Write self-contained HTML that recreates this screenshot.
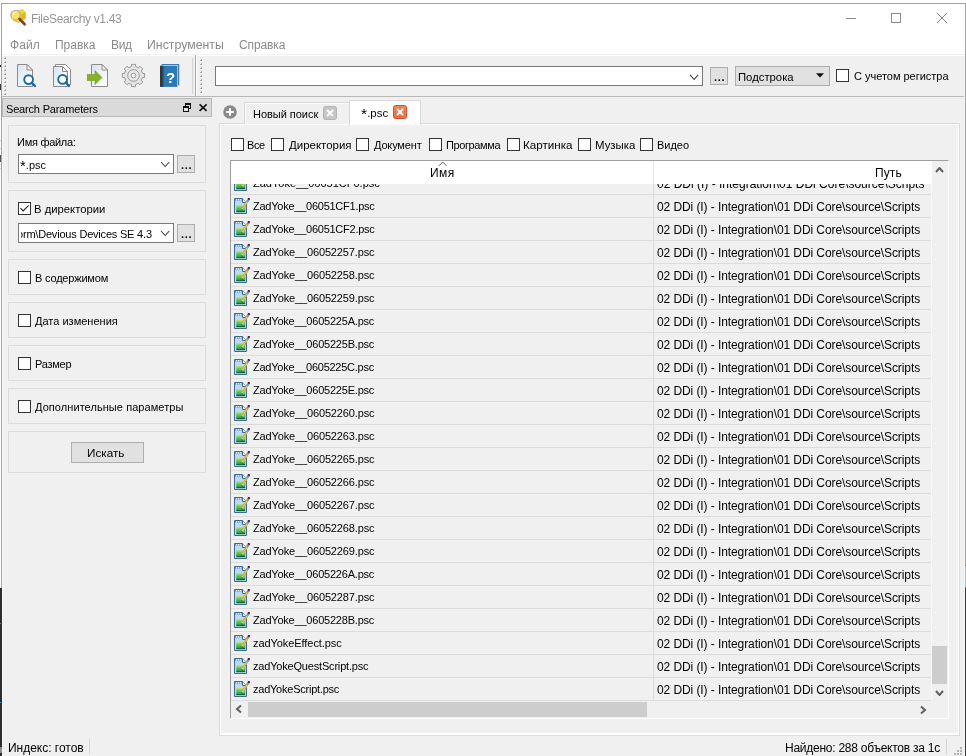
<!DOCTYPE html>
<html lang="ru"><head><meta charset="utf-8"><title>FileSearchy v1.43</title>
<style>
html,body{margin:0;padding:0;}
body{width:966px;height:756px;overflow:hidden;position:relative;background:#fff;
 font-family:"Liberation Sans",sans-serif;font-size:11px;}
.b{position:absolute;box-sizing:border-box;}
.t{position:absolute;white-space:pre;line-height:1;will-change:transform;}
.cb{width:13px;height:13px;border:1px solid #333;background:#fff;}
</style></head><body>

<div class="b" style="left:1px;top:3px;width:965px;height:760px;border:1px solid #a3a3a3;background:#fff;"></div>
<div class="b" style="left:0px;top:65px;width:1px;height:2px;background:#2a2a2a;"></div>
<div class="b" style="left:0px;top:84px;width:1px;height:6px;background:#3a3a3a;"></div>
<div class="b" style="left:0px;top:140px;width:1px;height:1px;background:#d0d0d0;"></div>
<div class="b" style="left:0px;top:148px;width:1px;height:1px;background:#d0d0d0;"></div>
<div class="b" style="left:0px;top:155px;width:1px;height:7px;background:#555;"></div>
<div class="b" style="left:0px;top:168px;width:1px;height:1px;background:#d0d0d0;"></div>
<div class="b" style="left:0px;top:588px;width:2px;height:159px;background:#2d2d2d;"></div>
<div class="b" style="left:0px;top:623px;width:1px;height:1px;background:#3a8ac0;"></div>
<div class="b" style="left:0px;top:702px;width:1px;height:1px;background:#3a8ac0;"></div>
<div class="b" style="left:0px;top:747px;width:2px;height:6px;background:#8c8c8c;"></div>
<div class="b" style="left:0px;top:753px;width:2px;height:3px;background:#2d2d2d;"></div>
<div class="b" style="left:965px;top:565px;width:1px;height:1px;background:#3a8ac0;"></div>
<div class="b" style="left:965px;top:566px;width:1px;height:21px;background:#b4bcc4;"></div>
<div class="b" style="left:965px;top:587px;width:1px;height:1px;background:#3a8ac0;"></div>
<div class="b" style="left:965px;top:588px;width:1px;height:168px;background:#383838;"></div>
<div class="b" style="left:2px;top:56px;width:963px;height:700px;background:#f0f0f0;"></div>
<div class="b" style="left:2px;top:54px;width:963px;height:1px;background:#f2f2f2;"></div>
<div class="b" style="left:2px;top:96px;width:963px;height:1px;background:#b8b8b8;"></div>
<div class="b" style="left:2px;top:117px;width:1px;height:639px;background:#f9f9f9;"></div>
<div class="b" style="left:964px;top:56px;width:1px;height:700px;background:#f6f6f6;"></div>
<svg class="b" style="left:10px;top:9px" width="17" height="17" viewBox="0 0 17 17">
<path d="M4 3 L12.5 0.6 L15.4 3.2 L15.4 9.5 L8.5 13.6 L3.4 11.5 Z" fill="#f7d827" stroke="#d4ab10" stroke-width="0.5"/>
<path d="M8.5 13.6 L15.4 9.5 L15.4 3.2 L11.5 5 Z" fill="#e8b80e"/>
<path d="M10.5 11 L15.2 16" stroke="#8c8c8c" stroke-opacity="0.5" stroke-width="2.6" stroke-linecap="round"/>
<circle cx="5.6" cy="6.2" r="4.7" fill="#fbe65c" fill-opacity="0.8" stroke="#b4b6bb" stroke-width="1.5"/>
<path d="M3 5.5 Q4 3 6.5 3.2" stroke="#fff" stroke-opacity="0.8" stroke-width="1.2" fill="none"/>
<path d="M9.4 9.8 L14.6 15.2" stroke="#8c3a12" stroke-width="2.4" stroke-linecap="round"/>
</svg>
<span id="title" class="t" style="left:30.80px;top:12.84px;font-size:12px;letter-spacing:-0.335px;color:#969696;">FileSearchy v1.43</span>
<svg class="b" style="left:840px;top:8px" width="120" height="22" viewBox="0 0 120 22" shape-rendering="crispEdges">
<path d="M6 10.5 H16" stroke="#8a8a8a" stroke-width="1"/>
<rect x="51.5" y="5.5" width="9" height="9" fill="none" stroke="#8a8a8a" stroke-width="1"/>
</svg>
<svg class="b" style="left:936px;top:12px" width="12" height="12" viewBox="0 0 12 12">
<path d="M1 1 L11 11 M11 1 L1 11" stroke="#858585" stroke-width="1" fill="none"/></svg>
<span id="m1" class="t" style="left:9.82px;top:38.84px;font-size:12px;letter-spacing:0.057px;color:#8a8a8a;">Файл</span>
<span id="m2" class="t" style="left:54.80px;top:38.84px;font-size:12px;letter-spacing:-0.028px;color:#8a8a8a;">Правка</span>
<span id="m3" class="t" style="left:110.82px;top:38.84px;font-size:12px;letter-spacing:-0.350px;color:#8a8a8a;">Вид</span>
<span id="m4" class="t" style="left:146.80px;top:38.84px;font-size:12px;letter-spacing:0.000px;color:#8a8a8a;transform:scaleX(1.0260);transform-origin:0 0;">Инструменты</span>
<span id="m5" class="t" style="left:239.30px;top:38.84px;font-size:12px;letter-spacing:-0.117px;color:#8a8a8a;">Справка</span>
<svg class="b" style="left:4px;top:57px" width="3" height="40" viewBox="0 0 3 40" shape-rendering="crispEdges"><rect x="1" y="0" width="1" height="1" fill="#b4b4b4"/><rect x="0" y="1" width="1" height="1" fill="#b4b4b4"/><rect x="1" y="1" width="1" height="1" fill="#8e8e8e"/><rect x="0" y="0" width="1" height="1" fill="#fbfbfb"/><rect x="2" y="1" width="1" height="1" fill="#fbfbfb"/><rect x="1" y="2" width="1" height="1" fill="#fbfbfb"/><rect x="1" y="4" width="1" height="1" fill="#b4b4b4"/><rect x="0" y="5" width="1" height="1" fill="#b4b4b4"/><rect x="1" y="5" width="1" height="1" fill="#8e8e8e"/><rect x="0" y="4" width="1" height="1" fill="#fbfbfb"/><rect x="2" y="5" width="1" height="1" fill="#fbfbfb"/><rect x="1" y="6" width="1" height="1" fill="#fbfbfb"/><rect x="1" y="8" width="1" height="1" fill="#b4b4b4"/><rect x="0" y="9" width="1" height="1" fill="#b4b4b4"/><rect x="1" y="9" width="1" height="1" fill="#8e8e8e"/><rect x="0" y="8" width="1" height="1" fill="#fbfbfb"/><rect x="2" y="9" width="1" height="1" fill="#fbfbfb"/><rect x="1" y="10" width="1" height="1" fill="#fbfbfb"/><rect x="1" y="12" width="1" height="1" fill="#b4b4b4"/><rect x="0" y="13" width="1" height="1" fill="#b4b4b4"/><rect x="1" y="13" width="1" height="1" fill="#8e8e8e"/><rect x="0" y="12" width="1" height="1" fill="#fbfbfb"/><rect x="2" y="13" width="1" height="1" fill="#fbfbfb"/><rect x="1" y="14" width="1" height="1" fill="#fbfbfb"/><rect x="1" y="16" width="1" height="1" fill="#b4b4b4"/><rect x="0" y="17" width="1" height="1" fill="#b4b4b4"/><rect x="1" y="17" width="1" height="1" fill="#8e8e8e"/><rect x="0" y="16" width="1" height="1" fill="#fbfbfb"/><rect x="2" y="17" width="1" height="1" fill="#fbfbfb"/><rect x="1" y="18" width="1" height="1" fill="#fbfbfb"/><rect x="1" y="20" width="1" height="1" fill="#b4b4b4"/><rect x="0" y="21" width="1" height="1" fill="#b4b4b4"/><rect x="1" y="21" width="1" height="1" fill="#8e8e8e"/><rect x="0" y="20" width="1" height="1" fill="#fbfbfb"/><rect x="2" y="21" width="1" height="1" fill="#fbfbfb"/><rect x="1" y="22" width="1" height="1" fill="#fbfbfb"/><rect x="1" y="24" width="1" height="1" fill="#b4b4b4"/><rect x="0" y="25" width="1" height="1" fill="#b4b4b4"/><rect x="1" y="25" width="1" height="1" fill="#8e8e8e"/><rect x="0" y="24" width="1" height="1" fill="#fbfbfb"/><rect x="2" y="25" width="1" height="1" fill="#fbfbfb"/><rect x="1" y="26" width="1" height="1" fill="#fbfbfb"/><rect x="1" y="28" width="1" height="1" fill="#b4b4b4"/><rect x="0" y="29" width="1" height="1" fill="#b4b4b4"/><rect x="1" y="29" width="1" height="1" fill="#8e8e8e"/><rect x="0" y="28" width="1" height="1" fill="#fbfbfb"/><rect x="2" y="29" width="1" height="1" fill="#fbfbfb"/><rect x="1" y="30" width="1" height="1" fill="#fbfbfb"/><rect x="1" y="32" width="1" height="1" fill="#b4b4b4"/><rect x="0" y="33" width="1" height="1" fill="#b4b4b4"/><rect x="1" y="33" width="1" height="1" fill="#8e8e8e"/><rect x="0" y="32" width="1" height="1" fill="#fbfbfb"/><rect x="2" y="33" width="1" height="1" fill="#fbfbfb"/><rect x="1" y="34" width="1" height="1" fill="#fbfbfb"/><rect x="1" y="36" width="1" height="1" fill="#b4b4b4"/><rect x="0" y="37" width="1" height="1" fill="#b4b4b4"/><rect x="1" y="37" width="1" height="1" fill="#8e8e8e"/><rect x="0" y="36" width="1" height="1" fill="#fbfbfb"/><rect x="2" y="37" width="1" height="1" fill="#fbfbfb"/><rect x="1" y="38" width="1" height="1" fill="#fbfbfb"/></svg>
<svg class="b" style="left:200px;top:59px" width="3" height="36" viewBox="0 0 3 36" shape-rendering="crispEdges"><rect x="1" y="0" width="1" height="1" fill="#b4b4b4"/><rect x="0" y="1" width="1" height="1" fill="#b4b4b4"/><rect x="1" y="1" width="1" height="1" fill="#8e8e8e"/><rect x="0" y="0" width="1" height="1" fill="#fbfbfb"/><rect x="2" y="1" width="1" height="1" fill="#fbfbfb"/><rect x="1" y="2" width="1" height="1" fill="#fbfbfb"/><rect x="1" y="4" width="1" height="1" fill="#b4b4b4"/><rect x="0" y="5" width="1" height="1" fill="#b4b4b4"/><rect x="1" y="5" width="1" height="1" fill="#8e8e8e"/><rect x="0" y="4" width="1" height="1" fill="#fbfbfb"/><rect x="2" y="5" width="1" height="1" fill="#fbfbfb"/><rect x="1" y="6" width="1" height="1" fill="#fbfbfb"/><rect x="1" y="8" width="1" height="1" fill="#b4b4b4"/><rect x="0" y="9" width="1" height="1" fill="#b4b4b4"/><rect x="1" y="9" width="1" height="1" fill="#8e8e8e"/><rect x="0" y="8" width="1" height="1" fill="#fbfbfb"/><rect x="2" y="9" width="1" height="1" fill="#fbfbfb"/><rect x="1" y="10" width="1" height="1" fill="#fbfbfb"/><rect x="1" y="12" width="1" height="1" fill="#b4b4b4"/><rect x="0" y="13" width="1" height="1" fill="#b4b4b4"/><rect x="1" y="13" width="1" height="1" fill="#8e8e8e"/><rect x="0" y="12" width="1" height="1" fill="#fbfbfb"/><rect x="2" y="13" width="1" height="1" fill="#fbfbfb"/><rect x="1" y="14" width="1" height="1" fill="#fbfbfb"/><rect x="1" y="16" width="1" height="1" fill="#b4b4b4"/><rect x="0" y="17" width="1" height="1" fill="#b4b4b4"/><rect x="1" y="17" width="1" height="1" fill="#8e8e8e"/><rect x="0" y="16" width="1" height="1" fill="#fbfbfb"/><rect x="2" y="17" width="1" height="1" fill="#fbfbfb"/><rect x="1" y="18" width="1" height="1" fill="#fbfbfb"/><rect x="1" y="20" width="1" height="1" fill="#b4b4b4"/><rect x="0" y="21" width="1" height="1" fill="#b4b4b4"/><rect x="1" y="21" width="1" height="1" fill="#8e8e8e"/><rect x="0" y="20" width="1" height="1" fill="#fbfbfb"/><rect x="2" y="21" width="1" height="1" fill="#fbfbfb"/><rect x="1" y="22" width="1" height="1" fill="#fbfbfb"/><rect x="1" y="24" width="1" height="1" fill="#b4b4b4"/><rect x="0" y="25" width="1" height="1" fill="#b4b4b4"/><rect x="1" y="25" width="1" height="1" fill="#8e8e8e"/><rect x="0" y="24" width="1" height="1" fill="#fbfbfb"/><rect x="2" y="25" width="1" height="1" fill="#fbfbfb"/><rect x="1" y="26" width="1" height="1" fill="#fbfbfb"/><rect x="1" y="28" width="1" height="1" fill="#b4b4b4"/><rect x="0" y="29" width="1" height="1" fill="#b4b4b4"/><rect x="1" y="29" width="1" height="1" fill="#8e8e8e"/><rect x="0" y="28" width="1" height="1" fill="#fbfbfb"/><rect x="2" y="29" width="1" height="1" fill="#fbfbfb"/><rect x="1" y="30" width="1" height="1" fill="#fbfbfb"/><rect x="1" y="32" width="1" height="1" fill="#b4b4b4"/><rect x="0" y="33" width="1" height="1" fill="#b4b4b4"/><rect x="1" y="33" width="1" height="1" fill="#8e8e8e"/><rect x="0" y="32" width="1" height="1" fill="#fbfbfb"/><rect x="2" y="33" width="1" height="1" fill="#fbfbfb"/><rect x="1" y="34" width="1" height="1" fill="#fbfbfb"/></svg>
<div class="b" style="left:192px;top:58px;width:1px;height:36px;background:#d4d4d4;"></div>
<div class="b" style="left:195px;top:55px;width:1px;height:41px;background:#a6a6a6;"></div>
<div class="b" style="left:196px;top:56px;width:1px;height:40px;background:#fdfdfd;"></div>
<svg class="b" style="left:17px;top:64px" width="20" height="24" viewBox="0 0 20 24"><defs><linearGradient id="pg" x1="0" y1="0" x2="1" y2="1"><stop offset="0" stop-color="#d6e2fa"/><stop offset="0.6" stop-color="#f2f5fc"/><stop offset="1" stop-color="#fff"/></linearGradient></defs><path d="M0.5 0.5 H10 L15.5 6 V22.5 H0.5 Z" fill="url(#pg)" stroke="#8c8c8c"/><path d="M10 0.5 V6 H15.5 Z" fill="#f4f4ee" stroke="#8c8c8c" stroke-linejoin="round"/><circle cx="11.6" cy="15.6" r="4.4" fill="#fff" fill-opacity="0.85" stroke="#1b6aa3" stroke-width="1.9"/><path d="M14.8 18.8 L18 22" stroke="#1b6aa3" stroke-width="2.4" stroke-linecap="round"/></svg>
<svg class="b" style="left:53px;top:64px" width="20" height="24" viewBox="0 0 20 24"><defs><linearGradient id="pg2" x1="0" y1="0" x2="1" y2="1"><stop offset="0" stop-color="#d6e2fa"/><stop offset="0.6" stop-color="#f2f5fc"/><stop offset="1" stop-color="#fff"/></linearGradient></defs><path d="M2.5 0.5 H12.5 L17.5 5.5 V20.5 H2.5 Z" fill="#fff" stroke="#8a8a8a"/><path d="M0.5 2.5 H9.5 L14.5 7.5 V22.5 H0.5 Z" fill="url(#pg2)" stroke="#8a8a8a"/><path d="M9.5 2.5 V7.5 H14.5 Z" fill="#f4f4ee" stroke="#8a8a8a" stroke-linejoin="round"/><circle cx="9.6" cy="15.4" r="4.4" fill="#fff" fill-opacity="0.85" stroke="#1b6aa3" stroke-width="1.9"/><path d="M12.8 18.6 L16 22" stroke="#1b6aa3" stroke-width="2.4" stroke-linecap="round"/></svg>
<svg class="b" style="left:87px;top:64px" width="22" height="24" viewBox="0 0 22 24"><defs><linearGradient id="pg3" x1="0" y1="0" x2="1" y2="1"><stop offset="0" stop-color="#d6e2fa"/><stop offset="0.6" stop-color="#f2f5fc"/><stop offset="1" stop-color="#fff"/></linearGradient></defs><path d="M4.5 0.5 H15 L20.5 6 V22.5 H4.5 Z" fill="url(#pg3)" stroke="#8c8c8c"/><path d="M15 0.5 V6 H20.5 Z" fill="#f4f4ee" stroke="#8c8c8c" stroke-linejoin="round"/><path d="M0 10.5 H8 V6.5 L15 13.5 L8 20.5 V16.5 H0 Z" fill="#86b324" stroke="#6f9a18" stroke-width="0.6"/></svg>
<svg class="b" style="left:121px;top:63px" width="25" height="25" viewBox="0 0 25 25"><path d="M23.63 10.56 L23.63 14.44 L21.45 14.65 L20.34 17.31 L21.75 19.00 L19.00 21.75 L17.31 20.34 L14.65 21.45 L14.44 23.63 L10.56 23.63 L10.35 21.45 L7.69 20.34 L6.00 21.75 L3.25 19.00 L4.66 17.31 L3.55 14.65 L1.37 14.44 L1.37 10.56 L3.55 10.35 L4.66 7.69 L3.25 6.00 L6.00 3.25 L7.69 4.66 L10.35 3.55 L10.56 1.37 L14.44 1.37 L14.65 3.55 L17.31 4.66 L19.00 3.25 L21.75 6.00 L20.34 7.69 L21.45 10.35 Z" fill="#e4e4e4" stroke="#8e8e8e" stroke-width="0.9" stroke-linejoin="round"/><circle cx="12.5" cy="12.5" r="5.8" fill="#e9e9e9" stroke="#8e8e8e" stroke-width="0.9"/><circle cx="12.5" cy="12.5" r="2.4" fill="#f0f0f0" stroke="#8e8e8e" stroke-width="0.9"/></svg>
<svg class="b" style="left:160px;top:64px;will-change:transform" width="20" height="24" viewBox="0 0 20 24"><defs><linearGradient id="sp" x1="0" y1="0" x2="1" y2="0"><stop offset="0" stop-color="#1e2224"/><stop offset="1" stop-color="#4d565b"/></linearGradient></defs><rect x="1.6" y="0.2" width="17.6" height="21.2" fill="#1c6299"/><rect x="2" y="1.1" width="16.2" height="21" fill="#dfe3e7"/><rect x="0.2" y="1.8" width="17.1" height="21.1" fill="#2a7ab6"/><rect x="0.2" y="1.8" width="3.6" height="21.1" fill="url(#sp)"/><text x="10.7" y="19.3" font-family="Liberation Sans, sans-serif" font-weight="bold" font-size="15" fill="#fff" text-anchor="middle">?</text></svg>
<div class="b" style="left:215px;top:66px;width:488px;height:20px;background:#fff;border:1px solid #7a7a7a;"></div>
<svg class="b" style="left:688.9px;top:73.6px" width="10.2" height="6.4" viewBox="-1 -1 10.2 6.4"><path d="M0 0 L4.1 4.4 L8.2 0" fill="none" stroke="#444" stroke-width="1.1"/></svg>
<div class="b" style="left:710px;top:67px;width:18px;height:18px;background:#e1e1e1;border:1px solid #adadad;"></div>
<span id="dots0" class="t" style="left:713.60px;top:71.69px;font-size:11px;letter-spacing:0.700px;color:#000;font-weight:bold;">...</span>
<div class="b" style="left:735px;top:66px;width:95px;height:20px;background:#e1e1e1;border:1px solid #adadad;"></div>
<span id="substr" class="t" style="left:737.54px;top:71.69px;font-size:11px;letter-spacing:0.000px;color:#000;transform:scaleX(1.0271);transform-origin:0 0;">Подстрока</span>
<svg class="b" style="left:816px;top:73px" width="8" height="5" viewBox="0 0 8 5"><path d="M0 0.3 H8 L4 4.6 Z" fill="#111"/></svg>
<div class="b cb" style="left:836px;top:69px;"></div>
<span id="case" class="t" style="left:853.52px;top:70.69px;font-size:11px;letter-spacing:-0.016px;color:#000;">С учетом регистра</span>
<div class="b" style="left:2px;top:98px;width:210px;height:19px;background:#dadada;border:1px solid #bababa;"></div>
<span id="dock" class="t" style="left:6.30px;top:103.69px;font-size:11px;letter-spacing:-0.175px;color:#000;">Search Parameters</span>
<svg class="b" style="left:181px;top:102px" width="28" height="11" viewBox="0 0 28 11" shape-rendering="crispEdges">
<rect x="4.5" y="1.5" width="5" height="5" fill="none" stroke="#111"/><rect x="4" y="1" width="6" height="2" fill="#111"/>
<rect x="2.5" y="4.5" width="5" height="5" fill="#e6e6e6" stroke="#111"/><rect x="2" y="4" width="6" height="2" fill="#111"/>
</svg>
<svg class="b" style="left:198px;top:102px" width="11" height="11" viewBox="0 0 11 11">
<path d="M1.6 2.4 L8.6 8.8 M8.6 2.4 L1.6 8.8" stroke="#111" stroke-width="1.7" fill="none"/></svg>
<div class="b" style="left:8px;top:125px;width:198px;height:58px;border:1px solid #dcdcdc;"></div>
<div class="b" style="left:8px;top:190px;width:198px;height:62px;border:1px solid #dcdcdc;"></div>
<div class="b" style="left:8px;top:259px;width:198px;height:36px;border:1px solid #dcdcdc;"></div>
<div class="b" style="left:8px;top:302px;width:198px;height:36px;border:1px solid #dcdcdc;"></div>
<div class="b" style="left:8px;top:345px;width:198px;height:36px;border:1px solid #dcdcdc;"></div>
<div class="b" style="left:8px;top:388px;width:198px;height:36px;border:1px solid #dcdcdc;"></div>
<div class="b" style="left:8px;top:431px;width:198px;height:42px;border:1px solid #dcdcdc;"></div>
<span id="fname" class="t" style="left:17.30px;top:136.69px;font-size:11px;letter-spacing:-0.275px;color:#000;">Имя файла:</span>
<div class="b" style="left:18px;top:154px;width:156px;height:20px;background:#fff;border:1px solid #7a7a7a;"></div>
<span id="c1" class="t" style="left:20.15px;top:159.69px;font-size:11px;letter-spacing:0.000px;color:#000;transform:scaleX(0.9950);transform-origin:0 0;"><span style="font-size:15px;line-height:0;position:relative;top:1.6px;letter-spacing:0">*</span>.psc</span>
<svg class="b" style="left:159.9px;top:161.45px" width="10.3" height="6.5" viewBox="-1 -1 10.3 6.5"><path d="M0 0 L4.15 4.5 L8.3 0" fill="none" stroke="#444" stroke-width="1.1"/></svg>
<div class="b" style="left:177px;top:155px;width:18px;height:18px;background:#e1e1e1;border:1px solid #adadad;"></div>
<span id="dots1" class="t" style="left:180.80px;top:159.69px;font-size:11px;letter-spacing:0.700px;color:#000;font-weight:bold;">...</span>
<div class="b cb" style="left:18px;top:202px;"><svg width="11" height="11" viewBox="0 0 11 11" style="position:absolute;left:0;top:0"><path d="M1.5 5.2 L4.2 8 L9.6 2.4" fill="none" stroke="#222" stroke-width="1.1"/></svg></div>
<span id="indir" class="t" style="left:34.32px;top:203.69px;font-size:11px;letter-spacing:0.000px;color:#000;transform:scaleX(1.0257);transform-origin:0 0;">В директории</span>
<div class="b" style="left:18px;top:223px;width:156px;height:20px;background:#fff;border:1px solid #7a7a7a;"></div>
<div class="b" style="left:21px;top:224px;width:138px;height:18px;overflow:hidden">
<span id="c2" class="t" style="left:-4.00px;top:4.69px;font-size:11px;letter-spacing:-0.200px;color:#000;">orm\Devious Devices SE 4.3</span>
</div>
<svg class="b" style="left:159.9px;top:230.45px" width="10.3" height="6.5" viewBox="-1 -1 10.3 6.5"><path d="M0 0 L4.15 4.5 L8.3 0" fill="none" stroke="#444" stroke-width="1.1"/></svg>
<div class="b" style="left:177px;top:224px;width:18px;height:18px;background:#e1e1e1;border:1px solid #adadad;"></div>
<span id="dots2" class="t" style="left:180.80px;top:228.69px;font-size:11px;letter-spacing:0.700px;color:#000;font-weight:bold;">...</span>
<div class="b cb" style="left:18px;top:271px;"></div>
<span id="incont" class="t" style="left:34.54px;top:272.69px;font-size:11px;letter-spacing:-0.191px;color:#000;">В содержимом</span>
<div class="b cb" style="left:18px;top:314px;"></div>
<span id="dmod" class="t" style="left:35.24px;top:315.69px;font-size:11px;letter-spacing:0.010px;color:#000;">Дата изменения</span>
<div class="b cb" style="left:18px;top:357px;"></div>
<span id="size" class="t" style="left:34.54px;top:358.69px;font-size:11px;letter-spacing:-0.252px;color:#000;">Размер</span>
<div class="b cb" style="left:18px;top:400px;"></div>
<span id="extra" class="t" style="left:35.24px;top:401.69px;font-size:11px;letter-spacing:0.067px;color:#000;">Дополнительные параметры</span>
<div class="b" style="left:71px;top:442px;width:73px;height:21px;background:#e1e1e1;border:1px solid #adadad;"></div>
<span id="search" class="t" style="left:87.34px;top:447.69px;font-size:11px;letter-spacing:0.000px;color:#000;transform:scaleX(1.0653);transform-origin:0 0;">Искать</span>
<svg class="b" style="left:223px;top:105px" width="14" height="14" viewBox="0 0 14 14">
<circle cx="7" cy="7" r="6.8" fill="#8a8a8a"/><path d="M7 3.2 V10.8 M3.2 7 H10.8" stroke="#fff" stroke-width="2"/></svg>
<div class="b" style="left:219px;top:123px;width:741px;height:613px;border:1px solid #d9d9d9;border-right-color:#dcdcdc;border-bottom-color:#dcdcdc;"></div>
<div class="b" style="left:220px;top:124px;width:739px;height:611px;border:1px solid #fff;border-bottom-width:2px;"></div>
<div class="b" style="left:244px;top:102px;width:106px;height:22px;border:1px solid #d9d9d9;border-bottom:none;background:#f0f0f0;"></div>
<div class="b" style="left:245px;top:103px;width:104px;height:20px;border-left:1px solid #f9f9f9;border-top:1px solid #f9f9f9;"></div>
<span id="tab1" class="t" style="left:252.80px;top:108.69px;font-size:11px;letter-spacing:-0.028px;color:#000;">Новый поиск</span>
<div class="b" style="left:323px;top:106px;width:14px;height:14px;background:#c6c6c6;border:1px solid #b2b2b2;border-radius:2.5px;"></div>
<svg class="b" style="left:326px;top:109px" width="8" height="8" viewBox="0 0 8 8"><path d="M1 1 L7 7 M7 1 L1 7" stroke="#fff" stroke-width="1.8"/></svg>
<div class="b" style="left:349px;top:100px;width:72px;height:25px;border:1px solid #d9d9d9;border-bottom:none;background:#fff;"></div>
<span id="tab2" class="t" style="left:361.08px;top:107.69px;font-size:11px;letter-spacing:0.000px;color:#000;transform:scaleX(1.0483);transform-origin:0 0;"><span style="font-size:15px;line-height:0;position:relative;top:1.6px;letter-spacing:0">*</span>.psc</span>
<div class="b" style="left:393px;top:105px;width:14px;height:14px;background:linear-gradient(#ea8a5c,#e5703f);border:1px solid #e0482c;border-radius:2.5px;"></div>
<svg class="b" style="left:396px;top:108px" width="8" height="8" viewBox="0 0 8 8"><path d="M1 1 L7 7 M7 1 L1 7" stroke="#fff" stroke-width="1.8"/></svg>
<div class="b cb" style="left:231px;top:138px;"></div>
<span id="f1" class="t" style="left:247.34px;top:140.19px;font-size:11px;letter-spacing:-0.420px;color:#000;">Все</span>
<div class="b cb" style="left:271px;top:138px;"></div>
<span id="f2" class="t" style="left:289.00px;top:140.19px;font-size:11px;letter-spacing:0.000px;color:#000;transform:scaleX(1.0419);transform-origin:0 0;">Директория</span>
<div class="b cb" style="left:356px;top:138px;"></div>
<span id="f3" class="t" style="left:374.00px;top:140.19px;font-size:11px;letter-spacing:-0.160px;color:#000;">Документ</span>
<div class="b cb" style="left:429px;top:138px;"></div>
<span id="f4" class="t" style="left:446.30px;top:140.19px;font-size:11px;letter-spacing:-0.390px;color:#000;">Программа</span>
<div class="b cb" style="left:507px;top:138px;"></div>
<span id="f5" class="t" style="left:523.32px;top:140.19px;font-size:11px;letter-spacing:0.000px;color:#000;transform:scaleX(1.0566);transform-origin:0 0;">Картинка</span>
<div class="b cb" style="left:578px;top:138px;"></div>
<span id="f6" class="t" style="left:594.56px;top:140.19px;font-size:11px;letter-spacing:0.000px;color:#000;transform:scaleX(1.0379);transform-origin:0 0;">Музыка</span>
<div class="b cb" style="left:640px;top:138px;"></div>
<span id="f7" class="t" style="left:656.58px;top:140.19px;font-size:11px;letter-spacing:-0.035px;color:#000;">Видео</span>
<div class="b" style="left:230px;top:160px;width:719px;height:559px;border:1px solid #a0a0a0;border-right-color:#fff;border-bottom-color:#fff;background:#f0f0f0;"></div>
<svg width="0" height="0" style="position:absolute"><defs><linearGradient id="gg" x1="0" y1="0" x2="0" y2="1"><stop offset="0" stop-color="#c4e47e"/><stop offset="0.35" stop-color="#6cc860"/><stop offset="0.8" stop-color="#2da04a"/><stop offset="0.86" stop-color="#0a6a30"/><stop offset="1" stop-color="#0a6a30"/></linearGradient></defs></svg>
<div class="b" style="left:231px;top:161px;width:701px;height:540px;overflow:hidden">
<div class="b" style="left:0;top:11px;width:700px;height:23px;border-bottom:1px solid #dcdcdc;"></div>
<svg class="b" style="left:3px;top:14px" width="17" height="16" viewBox="0 0 17 16"><path d="M0.5 0.5 H8.5 L12.5 4.5 V15.5 H0.5 Z" fill="#bcdaf5" stroke="#3b6a9a"/><rect x="1" y="1" width="8" height="1.6" fill="#5f8dbd"/><path d="M8.5 0.5 V4.5 H12.5" fill="#eef5fc" stroke="#3b6a9a"/><circle cx="2.6" cy="1.8" r="0.75" fill="#fff"/><circle cx="4.7" cy="1.8" r="0.75" fill="#fff"/><circle cx="6.8" cy="1.8" r="0.75" fill="#fff"/><rect x="2.2" y="7" width="9" height="7.2" fill="url(#gg)"/><path d="M13.40 3.26 L8.86 10.56" stroke="#c9a52c" stroke-width="2.3"/><path d="M13.19 3.60 L8.96 10.39" stroke="#e6d27a" stroke-width="0.8"/><path d="M15.30 0.20 L14.30 1.81" stroke="#5a0a32" stroke-width="2.3"/><path d="M14.30 1.81 L13.29 3.43" stroke="#4f8fd6" stroke-width="2.3"/><path d="M8.96 10.39 L8.22 11.58" stroke="#e3d3ad" stroke-width="2"/><path d="M8.28 11.49 L7.70 12.43" stroke="#2c3450" stroke-width="1.2"/></svg>
<span id="n0" class="t" style="left:21.50px;top:16.69px;font-size:11px;letter-spacing:0.000px;color:#000;">ZadYoke__06051CF0.psc</span>
<span id="p0" class="t" style="left:426.30px;top:16.84px;font-size:12px;letter-spacing:0.000px;color:#000;">02 DDi (I) - Integration\01 DDi Core\source\Scripts</span>
<div class="b" style="left:0;top:34px;width:700px;height:23px;border-bottom:1px solid #dcdcdc;"></div>
<svg class="b" style="left:3px;top:37px" width="17" height="16" viewBox="0 0 17 16"><path d="M0.5 0.5 H8.5 L12.5 4.5 V15.5 H0.5 Z" fill="#bcdaf5" stroke="#3b6a9a"/><rect x="1" y="1" width="8" height="1.6" fill="#5f8dbd"/><path d="M8.5 0.5 V4.5 H12.5" fill="#eef5fc" stroke="#3b6a9a"/><circle cx="2.6" cy="1.8" r="0.75" fill="#fff"/><circle cx="4.7" cy="1.8" r="0.75" fill="#fff"/><circle cx="6.8" cy="1.8" r="0.75" fill="#fff"/><rect x="2.2" y="7" width="9" height="7.2" fill="url(#gg)"/><path d="M13.40 3.26 L8.86 10.56" stroke="#c9a52c" stroke-width="2.3"/><path d="M13.19 3.60 L8.96 10.39" stroke="#e6d27a" stroke-width="0.8"/><path d="M15.30 0.20 L14.30 1.81" stroke="#5a0a32" stroke-width="2.3"/><path d="M14.30 1.81 L13.29 3.43" stroke="#4f8fd6" stroke-width="2.3"/><path d="M8.96 10.39 L8.22 11.58" stroke="#e3d3ad" stroke-width="2"/><path d="M8.28 11.49 L7.70 12.43" stroke="#2c3450" stroke-width="1.2"/></svg>
<span id="n1" class="t" style="left:21.50px;top:39.69px;font-size:11px;letter-spacing:-0.248px;color:#000;">ZadYoke__06051CF1.psc</span>
<span id="p1" class="t" style="left:426.02px;top:39.84px;font-size:12px;letter-spacing:-0.086px;color:#000;">02 DDi (I) - Integration\01 DDi Core\source\Scripts</span>
<div class="b" style="left:0;top:57px;width:700px;height:23px;border-bottom:1px solid #dcdcdc;"></div>
<svg class="b" style="left:3px;top:60px" width="17" height="16" viewBox="0 0 17 16"><path d="M0.5 0.5 H8.5 L12.5 4.5 V15.5 H0.5 Z" fill="#bcdaf5" stroke="#3b6a9a"/><rect x="1" y="1" width="8" height="1.6" fill="#5f8dbd"/><path d="M8.5 0.5 V4.5 H12.5" fill="#eef5fc" stroke="#3b6a9a"/><circle cx="2.6" cy="1.8" r="0.75" fill="#fff"/><circle cx="4.7" cy="1.8" r="0.75" fill="#fff"/><circle cx="6.8" cy="1.8" r="0.75" fill="#fff"/><rect x="2.2" y="7" width="9" height="7.2" fill="url(#gg)"/><path d="M13.40 3.26 L8.86 10.56" stroke="#c9a52c" stroke-width="2.3"/><path d="M13.19 3.60 L8.96 10.39" stroke="#e6d27a" stroke-width="0.8"/><path d="M15.30 0.20 L14.30 1.81" stroke="#5a0a32" stroke-width="2.3"/><path d="M14.30 1.81 L13.29 3.43" stroke="#4f8fd6" stroke-width="2.3"/><path d="M8.96 10.39 L8.22 11.58" stroke="#e3d3ad" stroke-width="2"/><path d="M8.28 11.49 L7.70 12.43" stroke="#2c3450" stroke-width="1.2"/></svg>
<span id="n2" class="t" style="left:21.50px;top:62.69px;font-size:11px;letter-spacing:-0.248px;color:#000;">ZadYoke__06051CF2.psc</span>
<span id="p2" class="t" style="left:426.02px;top:62.84px;font-size:12px;letter-spacing:-0.086px;color:#000;">02 DDi (I) - Integration\01 DDi Core\source\Scripts</span>
<div class="b" style="left:0;top:80px;width:700px;height:23px;border-bottom:1px solid #dcdcdc;"></div>
<svg class="b" style="left:3px;top:83px" width="17" height="16" viewBox="0 0 17 16"><path d="M0.5 0.5 H8.5 L12.5 4.5 V15.5 H0.5 Z" fill="#bcdaf5" stroke="#3b6a9a"/><rect x="1" y="1" width="8" height="1.6" fill="#5f8dbd"/><path d="M8.5 0.5 V4.5 H12.5" fill="#eef5fc" stroke="#3b6a9a"/><circle cx="2.6" cy="1.8" r="0.75" fill="#fff"/><circle cx="4.7" cy="1.8" r="0.75" fill="#fff"/><circle cx="6.8" cy="1.8" r="0.75" fill="#fff"/><rect x="2.2" y="7" width="9" height="7.2" fill="url(#gg)"/><path d="M13.40 3.26 L8.86 10.56" stroke="#c9a52c" stroke-width="2.3"/><path d="M13.19 3.60 L8.96 10.39" stroke="#e6d27a" stroke-width="0.8"/><path d="M15.30 0.20 L14.30 1.81" stroke="#5a0a32" stroke-width="2.3"/><path d="M14.30 1.81 L13.29 3.43" stroke="#4f8fd6" stroke-width="2.3"/><path d="M8.96 10.39 L8.22 11.58" stroke="#e3d3ad" stroke-width="2"/><path d="M8.28 11.49 L7.70 12.43" stroke="#2c3450" stroke-width="1.2"/></svg>
<span id="n3" class="t" style="left:21.50px;top:85.69px;font-size:11px;letter-spacing:-0.143px;color:#000;">ZadYoke__06052257.psc</span>
<span id="p3" class="t" style="left:426.02px;top:85.84px;font-size:12px;letter-spacing:-0.086px;color:#000;">02 DDi (I) - Integration\01 DDi Core\source\Scripts</span>
<div class="b" style="left:0;top:103px;width:700px;height:23px;border-bottom:1px solid #dcdcdc;"></div>
<svg class="b" style="left:3px;top:106px" width="17" height="16" viewBox="0 0 17 16"><path d="M0.5 0.5 H8.5 L12.5 4.5 V15.5 H0.5 Z" fill="#bcdaf5" stroke="#3b6a9a"/><rect x="1" y="1" width="8" height="1.6" fill="#5f8dbd"/><path d="M8.5 0.5 V4.5 H12.5" fill="#eef5fc" stroke="#3b6a9a"/><circle cx="2.6" cy="1.8" r="0.75" fill="#fff"/><circle cx="4.7" cy="1.8" r="0.75" fill="#fff"/><circle cx="6.8" cy="1.8" r="0.75" fill="#fff"/><rect x="2.2" y="7" width="9" height="7.2" fill="url(#gg)"/><path d="M13.40 3.26 L8.86 10.56" stroke="#c9a52c" stroke-width="2.3"/><path d="M13.19 3.60 L8.96 10.39" stroke="#e6d27a" stroke-width="0.8"/><path d="M15.30 0.20 L14.30 1.81" stroke="#5a0a32" stroke-width="2.3"/><path d="M14.30 1.81 L13.29 3.43" stroke="#4f8fd6" stroke-width="2.3"/><path d="M8.96 10.39 L8.22 11.58" stroke="#e3d3ad" stroke-width="2"/><path d="M8.28 11.49 L7.70 12.43" stroke="#2c3450" stroke-width="1.2"/></svg>
<span id="n4" class="t" style="left:21.50px;top:108.69px;font-size:11px;letter-spacing:-0.143px;color:#000;">ZadYoke__06052258.psc</span>
<span id="p4" class="t" style="left:426.02px;top:108.84px;font-size:12px;letter-spacing:-0.086px;color:#000;">02 DDi (I) - Integration\01 DDi Core\source\Scripts</span>
<div class="b" style="left:0;top:126px;width:700px;height:23px;border-bottom:1px solid #dcdcdc;"></div>
<svg class="b" style="left:3px;top:129px" width="17" height="16" viewBox="0 0 17 16"><path d="M0.5 0.5 H8.5 L12.5 4.5 V15.5 H0.5 Z" fill="#bcdaf5" stroke="#3b6a9a"/><rect x="1" y="1" width="8" height="1.6" fill="#5f8dbd"/><path d="M8.5 0.5 V4.5 H12.5" fill="#eef5fc" stroke="#3b6a9a"/><circle cx="2.6" cy="1.8" r="0.75" fill="#fff"/><circle cx="4.7" cy="1.8" r="0.75" fill="#fff"/><circle cx="6.8" cy="1.8" r="0.75" fill="#fff"/><rect x="2.2" y="7" width="9" height="7.2" fill="url(#gg)"/><path d="M13.40 3.26 L8.86 10.56" stroke="#c9a52c" stroke-width="2.3"/><path d="M13.19 3.60 L8.96 10.39" stroke="#e6d27a" stroke-width="0.8"/><path d="M15.30 0.20 L14.30 1.81" stroke="#5a0a32" stroke-width="2.3"/><path d="M14.30 1.81 L13.29 3.43" stroke="#4f8fd6" stroke-width="2.3"/><path d="M8.96 10.39 L8.22 11.58" stroke="#e3d3ad" stroke-width="2"/><path d="M8.28 11.49 L7.70 12.43" stroke="#2c3450" stroke-width="1.2"/></svg>
<span id="n5" class="t" style="left:21.50px;top:131.69px;font-size:11px;letter-spacing:-0.143px;color:#000;">ZadYoke__06052259.psc</span>
<span id="p5" class="t" style="left:426.02px;top:131.84px;font-size:12px;letter-spacing:-0.086px;color:#000;">02 DDi (I) - Integration\01 DDi Core\source\Scripts</span>
<div class="b" style="left:0;top:149px;width:700px;height:23px;border-bottom:1px solid #dcdcdc;"></div>
<svg class="b" style="left:3px;top:152px" width="17" height="16" viewBox="0 0 17 16"><path d="M0.5 0.5 H8.5 L12.5 4.5 V15.5 H0.5 Z" fill="#bcdaf5" stroke="#3b6a9a"/><rect x="1" y="1" width="8" height="1.6" fill="#5f8dbd"/><path d="M8.5 0.5 V4.5 H12.5" fill="#eef5fc" stroke="#3b6a9a"/><circle cx="2.6" cy="1.8" r="0.75" fill="#fff"/><circle cx="4.7" cy="1.8" r="0.75" fill="#fff"/><circle cx="6.8" cy="1.8" r="0.75" fill="#fff"/><rect x="2.2" y="7" width="9" height="7.2" fill="url(#gg)"/><path d="M13.40 3.26 L8.86 10.56" stroke="#c9a52c" stroke-width="2.3"/><path d="M13.19 3.60 L8.96 10.39" stroke="#e6d27a" stroke-width="0.8"/><path d="M15.30 0.20 L14.30 1.81" stroke="#5a0a32" stroke-width="2.3"/><path d="M14.30 1.81 L13.29 3.43" stroke="#4f8fd6" stroke-width="2.3"/><path d="M8.96 10.39 L8.22 11.58" stroke="#e3d3ad" stroke-width="2"/><path d="M8.28 11.49 L7.70 12.43" stroke="#2c3450" stroke-width="1.2"/></svg>
<span id="n6" class="t" style="left:21.50px;top:154.69px;font-size:11px;letter-spacing:-0.213px;color:#000;">ZadYoke__0605225A.psc</span>
<span id="p6" class="t" style="left:426.02px;top:154.84px;font-size:12px;letter-spacing:-0.086px;color:#000;">02 DDi (I) - Integration\01 DDi Core\source\Scripts</span>
<div class="b" style="left:0;top:172px;width:700px;height:23px;border-bottom:1px solid #dcdcdc;"></div>
<svg class="b" style="left:3px;top:175px" width="17" height="16" viewBox="0 0 17 16"><path d="M0.5 0.5 H8.5 L12.5 4.5 V15.5 H0.5 Z" fill="#bcdaf5" stroke="#3b6a9a"/><rect x="1" y="1" width="8" height="1.6" fill="#5f8dbd"/><path d="M8.5 0.5 V4.5 H12.5" fill="#eef5fc" stroke="#3b6a9a"/><circle cx="2.6" cy="1.8" r="0.75" fill="#fff"/><circle cx="4.7" cy="1.8" r="0.75" fill="#fff"/><circle cx="6.8" cy="1.8" r="0.75" fill="#fff"/><rect x="2.2" y="7" width="9" height="7.2" fill="url(#gg)"/><path d="M13.40 3.26 L8.86 10.56" stroke="#c9a52c" stroke-width="2.3"/><path d="M13.19 3.60 L8.96 10.39" stroke="#e6d27a" stroke-width="0.8"/><path d="M15.30 0.20 L14.30 1.81" stroke="#5a0a32" stroke-width="2.3"/><path d="M14.30 1.81 L13.29 3.43" stroke="#4f8fd6" stroke-width="2.3"/><path d="M8.96 10.39 L8.22 11.58" stroke="#e3d3ad" stroke-width="2"/><path d="M8.28 11.49 L7.70 12.43" stroke="#2c3450" stroke-width="1.2"/></svg>
<span id="n7" class="t" style="left:21.50px;top:177.69px;font-size:11px;letter-spacing:-0.213px;color:#000;">ZadYoke__0605225B.psc</span>
<span id="p7" class="t" style="left:426.02px;top:177.84px;font-size:12px;letter-spacing:-0.086px;color:#000;">02 DDi (I) - Integration\01 DDi Core\source\Scripts</span>
<div class="b" style="left:0;top:195px;width:700px;height:23px;border-bottom:1px solid #dcdcdc;"></div>
<svg class="b" style="left:3px;top:198px" width="17" height="16" viewBox="0 0 17 16"><path d="M0.5 0.5 H8.5 L12.5 4.5 V15.5 H0.5 Z" fill="#bcdaf5" stroke="#3b6a9a"/><rect x="1" y="1" width="8" height="1.6" fill="#5f8dbd"/><path d="M8.5 0.5 V4.5 H12.5" fill="#eef5fc" stroke="#3b6a9a"/><circle cx="2.6" cy="1.8" r="0.75" fill="#fff"/><circle cx="4.7" cy="1.8" r="0.75" fill="#fff"/><circle cx="6.8" cy="1.8" r="0.75" fill="#fff"/><rect x="2.2" y="7" width="9" height="7.2" fill="url(#gg)"/><path d="M13.40 3.26 L8.86 10.56" stroke="#c9a52c" stroke-width="2.3"/><path d="M13.19 3.60 L8.96 10.39" stroke="#e6d27a" stroke-width="0.8"/><path d="M15.30 0.20 L14.30 1.81" stroke="#5a0a32" stroke-width="2.3"/><path d="M14.30 1.81 L13.29 3.43" stroke="#4f8fd6" stroke-width="2.3"/><path d="M8.96 10.39 L8.22 11.58" stroke="#e3d3ad" stroke-width="2"/><path d="M8.28 11.49 L7.70 12.43" stroke="#2c3450" stroke-width="1.2"/></svg>
<span id="n8" class="t" style="left:21.50px;top:200.69px;font-size:11px;letter-spacing:-0.248px;color:#000;">ZadYoke__0605225C.psc</span>
<span id="p8" class="t" style="left:426.02px;top:200.84px;font-size:12px;letter-spacing:-0.086px;color:#000;">02 DDi (I) - Integration\01 DDi Core\source\Scripts</span>
<div class="b" style="left:0;top:218px;width:700px;height:23px;border-bottom:1px solid #dcdcdc;"></div>
<svg class="b" style="left:3px;top:221px" width="17" height="16" viewBox="0 0 17 16"><path d="M0.5 0.5 H8.5 L12.5 4.5 V15.5 H0.5 Z" fill="#bcdaf5" stroke="#3b6a9a"/><rect x="1" y="1" width="8" height="1.6" fill="#5f8dbd"/><path d="M8.5 0.5 V4.5 H12.5" fill="#eef5fc" stroke="#3b6a9a"/><circle cx="2.6" cy="1.8" r="0.75" fill="#fff"/><circle cx="4.7" cy="1.8" r="0.75" fill="#fff"/><circle cx="6.8" cy="1.8" r="0.75" fill="#fff"/><rect x="2.2" y="7" width="9" height="7.2" fill="url(#gg)"/><path d="M13.40 3.26 L8.86 10.56" stroke="#c9a52c" stroke-width="2.3"/><path d="M13.19 3.60 L8.96 10.39" stroke="#e6d27a" stroke-width="0.8"/><path d="M15.30 0.20 L14.30 1.81" stroke="#5a0a32" stroke-width="2.3"/><path d="M14.30 1.81 L13.29 3.43" stroke="#4f8fd6" stroke-width="2.3"/><path d="M8.96 10.39 L8.22 11.58" stroke="#e3d3ad" stroke-width="2"/><path d="M8.28 11.49 L7.70 12.43" stroke="#2c3450" stroke-width="1.2"/></svg>
<span id="n9" class="t" style="left:21.50px;top:223.69px;font-size:11px;letter-spacing:-0.213px;color:#000;">ZadYoke__0605225E.psc</span>
<span id="p9" class="t" style="left:426.02px;top:223.84px;font-size:12px;letter-spacing:-0.086px;color:#000;">02 DDi (I) - Integration\01 DDi Core\source\Scripts</span>
<div class="b" style="left:0;top:241px;width:700px;height:23px;border-bottom:1px solid #dcdcdc;"></div>
<svg class="b" style="left:3px;top:244px" width="17" height="16" viewBox="0 0 17 16"><path d="M0.5 0.5 H8.5 L12.5 4.5 V15.5 H0.5 Z" fill="#bcdaf5" stroke="#3b6a9a"/><rect x="1" y="1" width="8" height="1.6" fill="#5f8dbd"/><path d="M8.5 0.5 V4.5 H12.5" fill="#eef5fc" stroke="#3b6a9a"/><circle cx="2.6" cy="1.8" r="0.75" fill="#fff"/><circle cx="4.7" cy="1.8" r="0.75" fill="#fff"/><circle cx="6.8" cy="1.8" r="0.75" fill="#fff"/><rect x="2.2" y="7" width="9" height="7.2" fill="url(#gg)"/><path d="M13.40 3.26 L8.86 10.56" stroke="#c9a52c" stroke-width="2.3"/><path d="M13.19 3.60 L8.96 10.39" stroke="#e6d27a" stroke-width="0.8"/><path d="M15.30 0.20 L14.30 1.81" stroke="#5a0a32" stroke-width="2.3"/><path d="M14.30 1.81 L13.29 3.43" stroke="#4f8fd6" stroke-width="2.3"/><path d="M8.96 10.39 L8.22 11.58" stroke="#e3d3ad" stroke-width="2"/><path d="M8.28 11.49 L7.70 12.43" stroke="#2c3450" stroke-width="1.2"/></svg>
<span id="n10" class="t" style="left:21.50px;top:246.69px;font-size:11px;letter-spacing:-0.143px;color:#000;">ZadYoke__06052260.psc</span>
<span id="p10" class="t" style="left:426.02px;top:246.84px;font-size:12px;letter-spacing:-0.086px;color:#000;">02 DDi (I) - Integration\01 DDi Core\source\Scripts</span>
<div class="b" style="left:0;top:264px;width:700px;height:23px;border-bottom:1px solid #dcdcdc;"></div>
<svg class="b" style="left:3px;top:267px" width="17" height="16" viewBox="0 0 17 16"><path d="M0.5 0.5 H8.5 L12.5 4.5 V15.5 H0.5 Z" fill="#bcdaf5" stroke="#3b6a9a"/><rect x="1" y="1" width="8" height="1.6" fill="#5f8dbd"/><path d="M8.5 0.5 V4.5 H12.5" fill="#eef5fc" stroke="#3b6a9a"/><circle cx="2.6" cy="1.8" r="0.75" fill="#fff"/><circle cx="4.7" cy="1.8" r="0.75" fill="#fff"/><circle cx="6.8" cy="1.8" r="0.75" fill="#fff"/><rect x="2.2" y="7" width="9" height="7.2" fill="url(#gg)"/><path d="M13.40 3.26 L8.86 10.56" stroke="#c9a52c" stroke-width="2.3"/><path d="M13.19 3.60 L8.96 10.39" stroke="#e6d27a" stroke-width="0.8"/><path d="M15.30 0.20 L14.30 1.81" stroke="#5a0a32" stroke-width="2.3"/><path d="M14.30 1.81 L13.29 3.43" stroke="#4f8fd6" stroke-width="2.3"/><path d="M8.96 10.39 L8.22 11.58" stroke="#e3d3ad" stroke-width="2"/><path d="M8.28 11.49 L7.70 12.43" stroke="#2c3450" stroke-width="1.2"/></svg>
<span id="n11" class="t" style="left:21.50px;top:269.69px;font-size:11px;letter-spacing:-0.143px;color:#000;">ZadYoke__06052263.psc</span>
<span id="p11" class="t" style="left:426.02px;top:269.84px;font-size:12px;letter-spacing:-0.086px;color:#000;">02 DDi (I) - Integration\01 DDi Core\source\Scripts</span>
<div class="b" style="left:0;top:287px;width:700px;height:23px;border-bottom:1px solid #dcdcdc;"></div>
<svg class="b" style="left:3px;top:290px" width="17" height="16" viewBox="0 0 17 16"><path d="M0.5 0.5 H8.5 L12.5 4.5 V15.5 H0.5 Z" fill="#bcdaf5" stroke="#3b6a9a"/><rect x="1" y="1" width="8" height="1.6" fill="#5f8dbd"/><path d="M8.5 0.5 V4.5 H12.5" fill="#eef5fc" stroke="#3b6a9a"/><circle cx="2.6" cy="1.8" r="0.75" fill="#fff"/><circle cx="4.7" cy="1.8" r="0.75" fill="#fff"/><circle cx="6.8" cy="1.8" r="0.75" fill="#fff"/><rect x="2.2" y="7" width="9" height="7.2" fill="url(#gg)"/><path d="M13.40 3.26 L8.86 10.56" stroke="#c9a52c" stroke-width="2.3"/><path d="M13.19 3.60 L8.96 10.39" stroke="#e6d27a" stroke-width="0.8"/><path d="M15.30 0.20 L14.30 1.81" stroke="#5a0a32" stroke-width="2.3"/><path d="M14.30 1.81 L13.29 3.43" stroke="#4f8fd6" stroke-width="2.3"/><path d="M8.96 10.39 L8.22 11.58" stroke="#e3d3ad" stroke-width="2"/><path d="M8.28 11.49 L7.70 12.43" stroke="#2c3450" stroke-width="1.2"/></svg>
<span id="n12" class="t" style="left:21.50px;top:292.69px;font-size:11px;letter-spacing:-0.143px;color:#000;">ZadYoke__06052265.psc</span>
<span id="p12" class="t" style="left:426.02px;top:292.84px;font-size:12px;letter-spacing:-0.086px;color:#000;">02 DDi (I) - Integration\01 DDi Core\source\Scripts</span>
<div class="b" style="left:0;top:310px;width:700px;height:23px;border-bottom:1px solid #dcdcdc;"></div>
<svg class="b" style="left:3px;top:313px" width="17" height="16" viewBox="0 0 17 16"><path d="M0.5 0.5 H8.5 L12.5 4.5 V15.5 H0.5 Z" fill="#bcdaf5" stroke="#3b6a9a"/><rect x="1" y="1" width="8" height="1.6" fill="#5f8dbd"/><path d="M8.5 0.5 V4.5 H12.5" fill="#eef5fc" stroke="#3b6a9a"/><circle cx="2.6" cy="1.8" r="0.75" fill="#fff"/><circle cx="4.7" cy="1.8" r="0.75" fill="#fff"/><circle cx="6.8" cy="1.8" r="0.75" fill="#fff"/><rect x="2.2" y="7" width="9" height="7.2" fill="url(#gg)"/><path d="M13.40 3.26 L8.86 10.56" stroke="#c9a52c" stroke-width="2.3"/><path d="M13.19 3.60 L8.96 10.39" stroke="#e6d27a" stroke-width="0.8"/><path d="M15.30 0.20 L14.30 1.81" stroke="#5a0a32" stroke-width="2.3"/><path d="M14.30 1.81 L13.29 3.43" stroke="#4f8fd6" stroke-width="2.3"/><path d="M8.96 10.39 L8.22 11.58" stroke="#e3d3ad" stroke-width="2"/><path d="M8.28 11.49 L7.70 12.43" stroke="#2c3450" stroke-width="1.2"/></svg>
<span id="n13" class="t" style="left:21.50px;top:315.69px;font-size:11px;letter-spacing:-0.143px;color:#000;">ZadYoke__06052266.psc</span>
<span id="p13" class="t" style="left:426.02px;top:315.84px;font-size:12px;letter-spacing:-0.086px;color:#000;">02 DDi (I) - Integration\01 DDi Core\source\Scripts</span>
<div class="b" style="left:0;top:333px;width:700px;height:23px;border-bottom:1px solid #dcdcdc;"></div>
<svg class="b" style="left:3px;top:336px" width="17" height="16" viewBox="0 0 17 16"><path d="M0.5 0.5 H8.5 L12.5 4.5 V15.5 H0.5 Z" fill="#bcdaf5" stroke="#3b6a9a"/><rect x="1" y="1" width="8" height="1.6" fill="#5f8dbd"/><path d="M8.5 0.5 V4.5 H12.5" fill="#eef5fc" stroke="#3b6a9a"/><circle cx="2.6" cy="1.8" r="0.75" fill="#fff"/><circle cx="4.7" cy="1.8" r="0.75" fill="#fff"/><circle cx="6.8" cy="1.8" r="0.75" fill="#fff"/><rect x="2.2" y="7" width="9" height="7.2" fill="url(#gg)"/><path d="M13.40 3.26 L8.86 10.56" stroke="#c9a52c" stroke-width="2.3"/><path d="M13.19 3.60 L8.96 10.39" stroke="#e6d27a" stroke-width="0.8"/><path d="M15.30 0.20 L14.30 1.81" stroke="#5a0a32" stroke-width="2.3"/><path d="M14.30 1.81 L13.29 3.43" stroke="#4f8fd6" stroke-width="2.3"/><path d="M8.96 10.39 L8.22 11.58" stroke="#e3d3ad" stroke-width="2"/><path d="M8.28 11.49 L7.70 12.43" stroke="#2c3450" stroke-width="1.2"/></svg>
<span id="n14" class="t" style="left:21.50px;top:338.69px;font-size:11px;letter-spacing:-0.143px;color:#000;">ZadYoke__06052267.psc</span>
<span id="p14" class="t" style="left:426.02px;top:338.84px;font-size:12px;letter-spacing:-0.086px;color:#000;">02 DDi (I) - Integration\01 DDi Core\source\Scripts</span>
<div class="b" style="left:0;top:356px;width:700px;height:23px;border-bottom:1px solid #dcdcdc;"></div>
<svg class="b" style="left:3px;top:359px" width="17" height="16" viewBox="0 0 17 16"><path d="M0.5 0.5 H8.5 L12.5 4.5 V15.5 H0.5 Z" fill="#bcdaf5" stroke="#3b6a9a"/><rect x="1" y="1" width="8" height="1.6" fill="#5f8dbd"/><path d="M8.5 0.5 V4.5 H12.5" fill="#eef5fc" stroke="#3b6a9a"/><circle cx="2.6" cy="1.8" r="0.75" fill="#fff"/><circle cx="4.7" cy="1.8" r="0.75" fill="#fff"/><circle cx="6.8" cy="1.8" r="0.75" fill="#fff"/><rect x="2.2" y="7" width="9" height="7.2" fill="url(#gg)"/><path d="M13.40 3.26 L8.86 10.56" stroke="#c9a52c" stroke-width="2.3"/><path d="M13.19 3.60 L8.96 10.39" stroke="#e6d27a" stroke-width="0.8"/><path d="M15.30 0.20 L14.30 1.81" stroke="#5a0a32" stroke-width="2.3"/><path d="M14.30 1.81 L13.29 3.43" stroke="#4f8fd6" stroke-width="2.3"/><path d="M8.96 10.39 L8.22 11.58" stroke="#e3d3ad" stroke-width="2"/><path d="M8.28 11.49 L7.70 12.43" stroke="#2c3450" stroke-width="1.2"/></svg>
<span id="n15" class="t" style="left:21.50px;top:361.69px;font-size:11px;letter-spacing:-0.143px;color:#000;">ZadYoke__06052268.psc</span>
<span id="p15" class="t" style="left:426.02px;top:361.84px;font-size:12px;letter-spacing:-0.086px;color:#000;">02 DDi (I) - Integration\01 DDi Core\source\Scripts</span>
<div class="b" style="left:0;top:379px;width:700px;height:23px;border-bottom:1px solid #dcdcdc;"></div>
<svg class="b" style="left:3px;top:382px" width="17" height="16" viewBox="0 0 17 16"><path d="M0.5 0.5 H8.5 L12.5 4.5 V15.5 H0.5 Z" fill="#bcdaf5" stroke="#3b6a9a"/><rect x="1" y="1" width="8" height="1.6" fill="#5f8dbd"/><path d="M8.5 0.5 V4.5 H12.5" fill="#eef5fc" stroke="#3b6a9a"/><circle cx="2.6" cy="1.8" r="0.75" fill="#fff"/><circle cx="4.7" cy="1.8" r="0.75" fill="#fff"/><circle cx="6.8" cy="1.8" r="0.75" fill="#fff"/><rect x="2.2" y="7" width="9" height="7.2" fill="url(#gg)"/><path d="M13.40 3.26 L8.86 10.56" stroke="#c9a52c" stroke-width="2.3"/><path d="M13.19 3.60 L8.96 10.39" stroke="#e6d27a" stroke-width="0.8"/><path d="M15.30 0.20 L14.30 1.81" stroke="#5a0a32" stroke-width="2.3"/><path d="M14.30 1.81 L13.29 3.43" stroke="#4f8fd6" stroke-width="2.3"/><path d="M8.96 10.39 L8.22 11.58" stroke="#e3d3ad" stroke-width="2"/><path d="M8.28 11.49 L7.70 12.43" stroke="#2c3450" stroke-width="1.2"/></svg>
<span id="n16" class="t" style="left:21.50px;top:384.69px;font-size:11px;letter-spacing:-0.143px;color:#000;">ZadYoke__06052269.psc</span>
<span id="p16" class="t" style="left:426.02px;top:384.84px;font-size:12px;letter-spacing:-0.086px;color:#000;">02 DDi (I) - Integration\01 DDi Core\source\Scripts</span>
<div class="b" style="left:0;top:402px;width:700px;height:23px;border-bottom:1px solid #dcdcdc;"></div>
<svg class="b" style="left:3px;top:405px" width="17" height="16" viewBox="0 0 17 16"><path d="M0.5 0.5 H8.5 L12.5 4.5 V15.5 H0.5 Z" fill="#bcdaf5" stroke="#3b6a9a"/><rect x="1" y="1" width="8" height="1.6" fill="#5f8dbd"/><path d="M8.5 0.5 V4.5 H12.5" fill="#eef5fc" stroke="#3b6a9a"/><circle cx="2.6" cy="1.8" r="0.75" fill="#fff"/><circle cx="4.7" cy="1.8" r="0.75" fill="#fff"/><circle cx="6.8" cy="1.8" r="0.75" fill="#fff"/><rect x="2.2" y="7" width="9" height="7.2" fill="url(#gg)"/><path d="M13.40 3.26 L8.86 10.56" stroke="#c9a52c" stroke-width="2.3"/><path d="M13.19 3.60 L8.96 10.39" stroke="#e6d27a" stroke-width="0.8"/><path d="M15.30 0.20 L14.30 1.81" stroke="#5a0a32" stroke-width="2.3"/><path d="M14.30 1.81 L13.29 3.43" stroke="#4f8fd6" stroke-width="2.3"/><path d="M8.96 10.39 L8.22 11.58" stroke="#e3d3ad" stroke-width="2"/><path d="M8.28 11.49 L7.70 12.43" stroke="#2c3450" stroke-width="1.2"/></svg>
<span id="n17" class="t" style="left:21.50px;top:407.69px;font-size:11px;letter-spacing:-0.213px;color:#000;">ZadYoke__0605226A.psc</span>
<span id="p17" class="t" style="left:426.02px;top:407.84px;font-size:12px;letter-spacing:-0.086px;color:#000;">02 DDi (I) - Integration\01 DDi Core\source\Scripts</span>
<div class="b" style="left:0;top:425px;width:700px;height:23px;border-bottom:1px solid #dcdcdc;"></div>
<svg class="b" style="left:3px;top:428px" width="17" height="16" viewBox="0 0 17 16"><path d="M0.5 0.5 H8.5 L12.5 4.5 V15.5 H0.5 Z" fill="#bcdaf5" stroke="#3b6a9a"/><rect x="1" y="1" width="8" height="1.6" fill="#5f8dbd"/><path d="M8.5 0.5 V4.5 H12.5" fill="#eef5fc" stroke="#3b6a9a"/><circle cx="2.6" cy="1.8" r="0.75" fill="#fff"/><circle cx="4.7" cy="1.8" r="0.75" fill="#fff"/><circle cx="6.8" cy="1.8" r="0.75" fill="#fff"/><rect x="2.2" y="7" width="9" height="7.2" fill="url(#gg)"/><path d="M13.40 3.26 L8.86 10.56" stroke="#c9a52c" stroke-width="2.3"/><path d="M13.19 3.60 L8.96 10.39" stroke="#e6d27a" stroke-width="0.8"/><path d="M15.30 0.20 L14.30 1.81" stroke="#5a0a32" stroke-width="2.3"/><path d="M14.30 1.81 L13.29 3.43" stroke="#4f8fd6" stroke-width="2.3"/><path d="M8.96 10.39 L8.22 11.58" stroke="#e3d3ad" stroke-width="2"/><path d="M8.28 11.49 L7.70 12.43" stroke="#2c3450" stroke-width="1.2"/></svg>
<span id="n18" class="t" style="left:21.50px;top:430.69px;font-size:11px;letter-spacing:-0.143px;color:#000;">ZadYoke__06052287.psc</span>
<span id="p18" class="t" style="left:426.02px;top:430.84px;font-size:12px;letter-spacing:-0.086px;color:#000;">02 DDi (I) - Integration\01 DDi Core\source\Scripts</span>
<div class="b" style="left:0;top:448px;width:700px;height:23px;border-bottom:1px solid #dcdcdc;"></div>
<svg class="b" style="left:3px;top:451px" width="17" height="16" viewBox="0 0 17 16"><path d="M0.5 0.5 H8.5 L12.5 4.5 V15.5 H0.5 Z" fill="#bcdaf5" stroke="#3b6a9a"/><rect x="1" y="1" width="8" height="1.6" fill="#5f8dbd"/><path d="M8.5 0.5 V4.5 H12.5" fill="#eef5fc" stroke="#3b6a9a"/><circle cx="2.6" cy="1.8" r="0.75" fill="#fff"/><circle cx="4.7" cy="1.8" r="0.75" fill="#fff"/><circle cx="6.8" cy="1.8" r="0.75" fill="#fff"/><rect x="2.2" y="7" width="9" height="7.2" fill="url(#gg)"/><path d="M13.40 3.26 L8.86 10.56" stroke="#c9a52c" stroke-width="2.3"/><path d="M13.19 3.60 L8.96 10.39" stroke="#e6d27a" stroke-width="0.8"/><path d="M15.30 0.20 L14.30 1.81" stroke="#5a0a32" stroke-width="2.3"/><path d="M14.30 1.81 L13.29 3.43" stroke="#4f8fd6" stroke-width="2.3"/><path d="M8.96 10.39 L8.22 11.58" stroke="#e3d3ad" stroke-width="2"/><path d="M8.28 11.49 L7.70 12.43" stroke="#2c3450" stroke-width="1.2"/></svg>
<span id="n19" class="t" style="left:21.50px;top:453.69px;font-size:11px;letter-spacing:-0.213px;color:#000;">ZadYoke__0605228B.psc</span>
<span id="p19" class="t" style="left:426.02px;top:453.84px;font-size:12px;letter-spacing:-0.086px;color:#000;">02 DDi (I) - Integration\01 DDi Core\source\Scripts</span>
<div class="b" style="left:0;top:471px;width:700px;height:23px;border-bottom:1px solid #dcdcdc;"></div>
<svg class="b" style="left:3px;top:474px" width="17" height="16" viewBox="0 0 17 16"><path d="M0.5 0.5 H8.5 L12.5 4.5 V15.5 H0.5 Z" fill="#bcdaf5" stroke="#3b6a9a"/><rect x="1" y="1" width="8" height="1.6" fill="#5f8dbd"/><path d="M8.5 0.5 V4.5 H12.5" fill="#eef5fc" stroke="#3b6a9a"/><circle cx="2.6" cy="1.8" r="0.75" fill="#fff"/><circle cx="4.7" cy="1.8" r="0.75" fill="#fff"/><circle cx="6.8" cy="1.8" r="0.75" fill="#fff"/><rect x="2.2" y="7" width="9" height="7.2" fill="url(#gg)"/><path d="M13.40 3.26 L8.86 10.56" stroke="#c9a52c" stroke-width="2.3"/><path d="M13.19 3.60 L8.96 10.39" stroke="#e6d27a" stroke-width="0.8"/><path d="M15.30 0.20 L14.30 1.81" stroke="#5a0a32" stroke-width="2.3"/><path d="M14.30 1.81 L13.29 3.43" stroke="#4f8fd6" stroke-width="2.3"/><path d="M8.96 10.39 L8.22 11.58" stroke="#e3d3ad" stroke-width="2"/><path d="M8.28 11.49 L7.70 12.43" stroke="#2c3450" stroke-width="1.2"/></svg>
<span id="n20" class="t" style="left:21.50px;top:476.69px;font-size:11px;letter-spacing:-0.070px;color:#000;">zadYokeEffect.psc</span>
<span id="p20" class="t" style="left:426.02px;top:476.84px;font-size:12px;letter-spacing:-0.086px;color:#000;">02 DDi (I) - Integration\01 DDi Core\source\Scripts</span>
<div class="b" style="left:0;top:494px;width:700px;height:23px;border-bottom:1px solid #dcdcdc;"></div>
<svg class="b" style="left:3px;top:497px" width="17" height="16" viewBox="0 0 17 16"><path d="M0.5 0.5 H8.5 L12.5 4.5 V15.5 H0.5 Z" fill="#bcdaf5" stroke="#3b6a9a"/><rect x="1" y="1" width="8" height="1.6" fill="#5f8dbd"/><path d="M8.5 0.5 V4.5 H12.5" fill="#eef5fc" stroke="#3b6a9a"/><circle cx="2.6" cy="1.8" r="0.75" fill="#fff"/><circle cx="4.7" cy="1.8" r="0.75" fill="#fff"/><circle cx="6.8" cy="1.8" r="0.75" fill="#fff"/><rect x="2.2" y="7" width="9" height="7.2" fill="url(#gg)"/><path d="M13.40 3.26 L8.86 10.56" stroke="#c9a52c" stroke-width="2.3"/><path d="M13.19 3.60 L8.96 10.39" stroke="#e6d27a" stroke-width="0.8"/><path d="M15.30 0.20 L14.30 1.81" stroke="#5a0a32" stroke-width="2.3"/><path d="M14.30 1.81 L13.29 3.43" stroke="#4f8fd6" stroke-width="2.3"/><path d="M8.96 10.39 L8.22 11.58" stroke="#e3d3ad" stroke-width="2"/><path d="M8.28 11.49 L7.70 12.43" stroke="#2c3450" stroke-width="1.2"/></svg>
<span id="n21" class="t" style="left:21.50px;top:499.69px;font-size:11px;letter-spacing:-0.185px;color:#000;">zadYokeQuestScript.psc</span>
<span id="p21" class="t" style="left:426.02px;top:499.84px;font-size:12px;letter-spacing:-0.086px;color:#000;">02 DDi (I) - Integration\01 DDi Core\source\Scripts</span>
<div class="b" style="left:0;top:517px;width:700px;height:23px;border-bottom:1px solid #dcdcdc;"></div>
<svg class="b" style="left:3px;top:520px" width="17" height="16" viewBox="0 0 17 16"><path d="M0.5 0.5 H8.5 L12.5 4.5 V15.5 H0.5 Z" fill="#bcdaf5" stroke="#3b6a9a"/><rect x="1" y="1" width="8" height="1.6" fill="#5f8dbd"/><path d="M8.5 0.5 V4.5 H12.5" fill="#eef5fc" stroke="#3b6a9a"/><circle cx="2.6" cy="1.8" r="0.75" fill="#fff"/><circle cx="4.7" cy="1.8" r="0.75" fill="#fff"/><circle cx="6.8" cy="1.8" r="0.75" fill="#fff"/><rect x="2.2" y="7" width="9" height="7.2" fill="url(#gg)"/><path d="M13.40 3.26 L8.86 10.56" stroke="#c9a52c" stroke-width="2.3"/><path d="M13.19 3.60 L8.96 10.39" stroke="#e6d27a" stroke-width="0.8"/><path d="M15.30 0.20 L14.30 1.81" stroke="#5a0a32" stroke-width="2.3"/><path d="M14.30 1.81 L13.29 3.43" stroke="#4f8fd6" stroke-width="2.3"/><path d="M8.96 10.39 L8.22 11.58" stroke="#e3d3ad" stroke-width="2"/><path d="M8.28 11.49 L7.70 12.43" stroke="#2c3450" stroke-width="1.2"/></svg>
<span id="n22" class="t" style="left:21.50px;top:522.69px;font-size:11px;letter-spacing:-0.235px;color:#000;">zadYokeScript.psc</span>
<span id="p22" class="t" style="left:426.02px;top:522.84px;font-size:12px;letter-spacing:-0.086px;color:#000;">02 DDi (I) - Integration\01 DDi Core\source\Scripts</span>
<div class="b" style="left:422px;top:0px;width:1px;height:539px;background:#dcdcdc;"></div>
<div class="b" style="left:700px;top:0px;width:1px;height:539px;background:#f8f8f8;"></div>
</div>
<div class="b" style="left:231px;top:161px;width:701px;height:23px;background:#fff;"></div>
<div class="b" style="left:653px;top:161px;width:1px;height:23px;background:#e5e5e5;"></div>
<span id="h1" class="t" style="left:430.06px;top:166.84px;font-size:12px;letter-spacing:0.420px;color:#000;">Имя</span>
<span id="h2" class="t" style="left:874.64px;top:166.84px;font-size:12px;letter-spacing:0.094px;color:#000;">Путь</span>
<svg class="b" style="left:438.0px;top:160.5px" width="9.4" height="5.8" viewBox="-1 -1 9.4 5.8"><path d="M0 3.8 L3.7 0 L7.4 3.8" fill="none" stroke="#555" stroke-width="1"/></svg>
<div class="b" style="left:932px;top:161px;width:16px;height:539px;background:#f0f0f0;"></div>
<svg class="b" style="left:935.0px;top:167.0px" width="9" height="6" viewBox="-1 -1 9 6"><path d="M0 4 L3.5 0 L7 4" fill="none" stroke="#606060" stroke-width="2"/></svg>
<div class="b" style="left:932px;top:646px;width:15px;height:38px;background:#cdcdcd;"></div>
<svg class="b" style="left:935.0px;top:689.8px" width="9" height="6" viewBox="-1 -1 9 6"><path d="M0 0 L3.5 4 L7 0" fill="none" stroke="#606060" stroke-width="2"/></svg>
<div class="b" style="left:231px;top:701px;width:717px;height:17px;background:#f0f0f0;"></div>
<div class="b" style="left:248px;top:702px;width:399px;height:15px;background:#cdcdcd;"></div>
<svg class="b" style="left:235px;top:704px" width="8" height="10" viewBox="0 0 8 10"><path d="M6 1.5 L2 5 L6 8.5" fill="none" stroke="#606060" stroke-width="2"/></svg>
<svg class="b" style="left:919px;top:704.7px" width="8" height="10" viewBox="0 0 8 10"><path d="M2 1.5 L6 5 L2 8.5" fill="none" stroke="#606060" stroke-width="2"/></svg>
<span id="st1" class="t" style="left:8.30px;top:741.84px;font-size:12px;letter-spacing:-0.021px;color:#000;">Индекс: готов</span>
<div class="b" style="left:89px;top:739px;width:1px;height:16px;background:#d7d7d7;"></div>
<span id="st2" class="t" style="left:785.40px;top:741.84px;font-size:12px;letter-spacing:-0.250px;color:#000;">Найдено: 288 объектов за 1с</span>
<div class="b" style="left:946px;top:739px;width:1px;height:16px;background:#d7d7d7;"></div>
<div class="b" style="left:954px;top:753px;width:2px;height:2px;background:#b4b4b4;"></div>
<div class="b" style="left:957px;top:753px;width:2px;height:2px;background:#b4b4b4;"></div>
<div class="b" style="left:960px;top:753px;width:2px;height:2px;background:#b4b4b4;"></div>
<div class="b" style="left:957px;top:750px;width:2px;height:2px;background:#b4b4b4;"></div>
<div class="b" style="left:960px;top:750px;width:2px;height:2px;background:#b4b4b4;"></div>
<div class="b" style="left:960px;top:747px;width:2px;height:2px;background:#b4b4b4;"></div>
</body></html>
